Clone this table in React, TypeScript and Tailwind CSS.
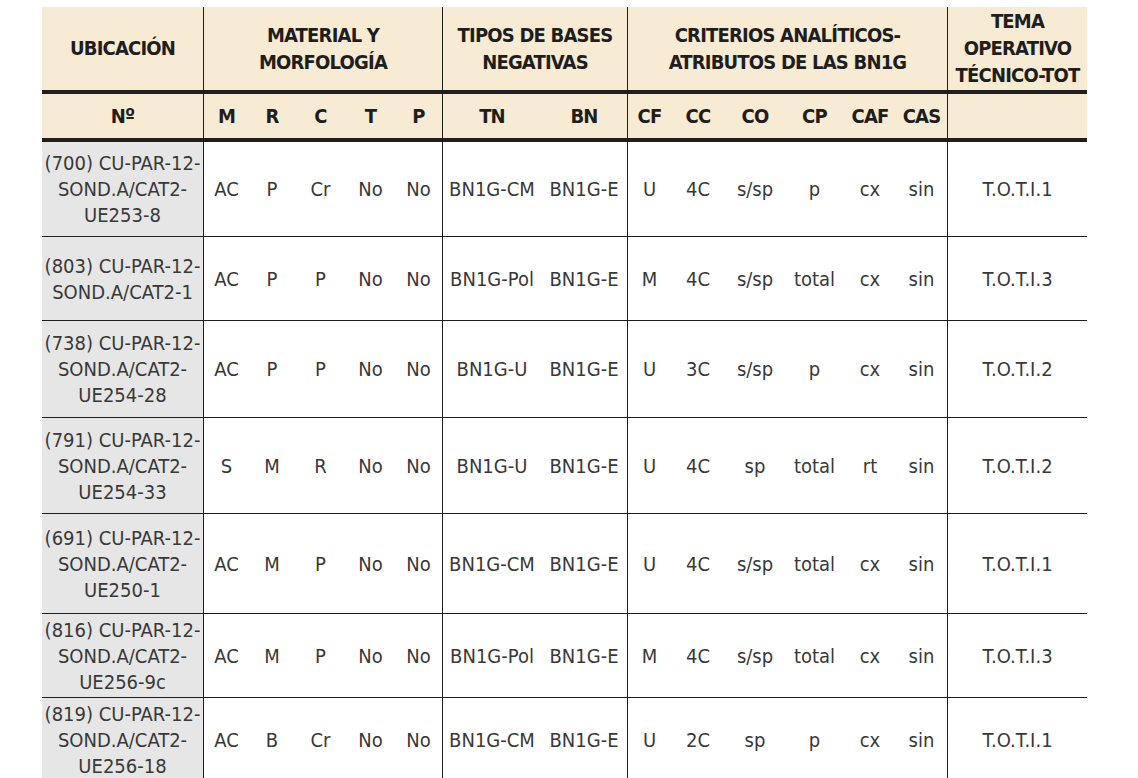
const cols = "grid-cols-[162px_45px_46px_51px_49px_48px_98px_87px_43px_54px_60px_59px_52px_52px_139px]";

type Row = { h: string; loc: string[]; vals: string[] };

const rows: Row[] = [
  { h: "h-[95px]", loc: ["(700) CU-PAR-12-", "SOND.A/CAT2-", "UE253-8"], vals: ["AC", "P", "Cr", "No", "No", "BN1G-CM", "BN1G-E", "U", "4C", "s/sp", "p", "cx", "sin", "T.O.T.I.1"] },
  { h: "h-[84px]", loc: ["(803) CU-PAR-12-", "SOND.A/CAT2-1"], vals: ["AC", "P", "P", "No", "No", "BN1G-Pol", "BN1G-E", "M", "4C", "s/sp", "total", "cx", "sin", "T.O.T.I.3"] },
  { h: "h-[97px]", loc: ["(738) CU-PAR-12-", "SOND.A/CAT2-", "UE254-28"], vals: ["AC", "P", "P", "No", "No", "BN1G-U", "BN1G-E", "U", "3C", "s/sp", "p", "cx", "sin", "T.O.T.I.2"] },
  { h: "h-[96px]", loc: ["(791) CU-PAR-12-", "SOND.A/CAT2-", "UE254-33"], vals: ["S", "M", "R", "No", "No", "BN1G-U", "BN1G-E", "U", "4C", "sp", "total", "rt", "sin", "T.O.T.I.2"] },
  { h: "h-[100px]", loc: ["(691) CU-PAR-12-", "SOND.A/CAT2-", "UE250-1"], vals: ["AC", "M", "P", "No", "No", "BN1G-CM", "BN1G-E", "U", "4C", "s/sp", "total", "cx", "sin", "T.O.T.I.1"] },
  { h: "h-[84px]", loc: ["(816) CU-PAR-12-", "SOND.A/CAT2-", "UE256-9c"], vals: ["AC", "M", "P", "No", "No", "BN1G-Pol", "BN1G-E", "M", "4C", "s/sp", "total", "cx", "sin", "T.O.T.I.3"] },
  { h: "h-[84px]", loc: ["(819) CU-PAR-12-", "SOND.A/CAT2-", "UE256-18"], vals: ["AC", "B", "Cr", "No", "No", "BN1G-CM", "BN1G-E", "U", "2C", "sp", "p", "cx", "sin", "T.O.T.I.1"] },
];

const subHeads = ["M", "R", "C", "T", "P", "TN", "BN", "CF", "CC", "CO", "CP", "CAF", "CAS", ""];
// columns that close a group get a vertical rule
const groupEnd = [4, 6, 12];

const head = "flex items-center justify-center border-b-4 border-[#1e1e1e] bg-[#f7ebd3] text-center text-[20px] leading-[27px] font-bold tracking-[-0.8px] text-[#1e1e1e]";

export default function App() {
  return (
    <div className="min-h-screen bg-white pl-[42px] pt-[7px] font-['Liberation_Sans_Narrow','DejaVu_Sans_Condensed','Liberation_Sans',sans-serif] [font-stretch:condensed]">
      <div className={`grid w-[1045px] ${cols}`}>
        {/* header row 1 */}
        <div className={`${head} h-[87px] border-r`}>UBICACIÓN</div>
        <div className={`${head} col-span-5 h-[87px] border-r`}>MATERIAL Y<br />MORFOLOGÍA</div>
        <div className={`${head} col-span-2 h-[87px] border-r`}>TIPOS DE BASES<br />NEGATIVAS</div>
        <div className={`${head} col-span-6 h-[87px] border-r`}>CRITERIOS ANALÍTICOS-<br />ATRIBUTOS DE LAS BN1G</div>
        <div className={`${head} h-[87px]`}>TEMA<br />OPERATIVO<br />TÉCNICO-TOT</div>

        {/* header row 2 */}
        <div className={`${head} h-[48px] border-r`}>Nº</div>
        {subHeads.map((s, i) => (
          <div key={i} className={`${head} h-[48px] ${groupEnd.includes(i) ? "border-r" : ""}`}>
            {s}
          </div>
        ))}

        {/* data rows */}
        {rows.map((r, ri) => (
          <div key={ri} className="contents">
            <div className={`flex ${r.h} flex-col items-center justify-center border-r border-b border-[#1e1e1e] bg-[#e6e6e6] text-center text-[20px] leading-[26px] text-[#383838]`}>
              {r.loc.map((l, li) => (
                <span key={li}>{l}</span>
              ))}
            </div>
            {r.vals.map((v, vi) => (
              <div
                key={vi}
                className={`flex ${r.h} items-center justify-center border-b border-[#1e1e1e] text-[20px] text-[#383838] ${groupEnd.includes(vi) ? "border-r" : ""}`}
              >
                {v}
              </div>
            ))}
          </div>
        ))}
      </div>
    </div>
  );
}
